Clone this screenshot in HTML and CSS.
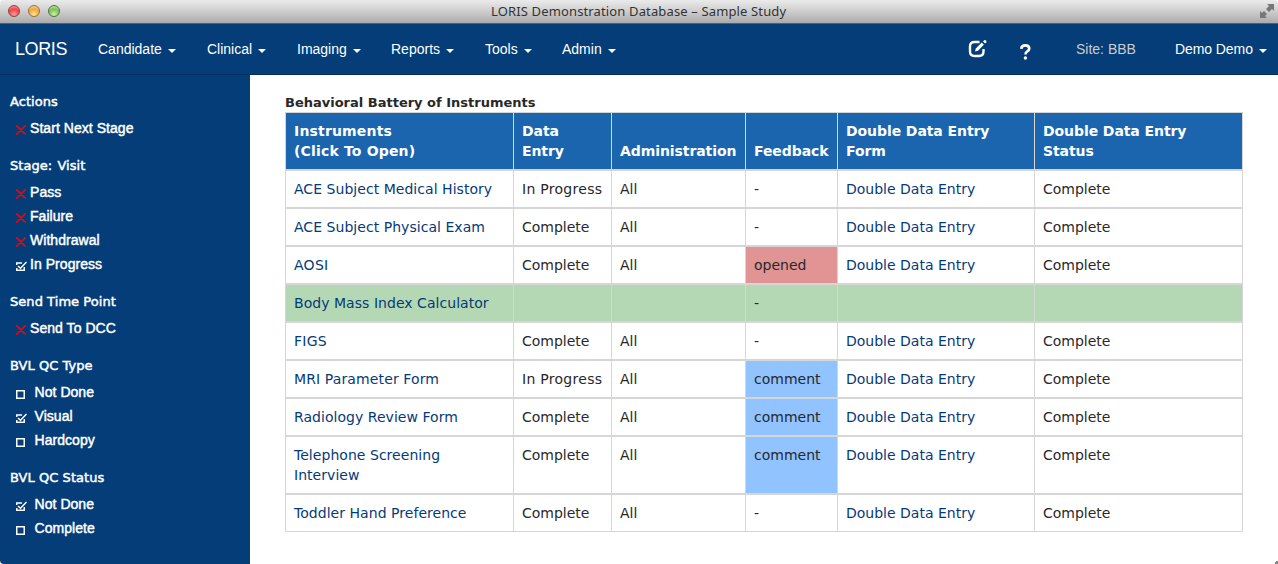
FILE: index.html
```
<!DOCTYPE html>
<html lang="en">
<head>
<meta charset="utf-8">
<title>LORIS Demonstration Database - Sample Study</title>
<link rel="stylesheet" href="styles.css">
</head>
<body>
<svg class="defs" width="0" height="0" aria-hidden="true">
  <symbol id="cross" viewBox="0 0 10 10"><path d="M0 1h1.500M8.500 1H10M1 1l8 8M9 1L1 9M0 9.300h1M9 9.300h1"/></symbol>
  <symbol id="box" viewBox="0 0 11 10"><path d="M.75 1.750h7.500v7.500h-7.500z"/></symbol>
  <symbol id="tick" viewBox="0 0 11 10"><path d="M0 2h6M.7 1.500v2.500M0 9.300h9M.7 7v2.500M8.300 6v3.500M2 5l2.500 2.300L10.500 1"/></symbol>
</svg>
<header class="titlebar">
  <div class="lights"><i class="light red"></i><i class="light amber"></i><i class="light green"></i></div>
  <div class="window-title"><span>LORIS Demonstration Database – Sample Study</span></div>
  <svg class="expand" viewBox="0 0 14 14" width="14" height="14"><path d="M7 0h7v7l-2-2-3 3-3-3 3-3zM0 14V7l2 2 2-2 3 3-2 2 2 2z"/></svg>
</header>
<nav class="nav">
  <a class="brand">LORIS</a>
  <a class="item candidate">Candidate<b class="caret"></b></a>
  <a class="item clinical">Clinical<b class="caret"></b></a>
  <a class="item imaging">Imaging<b class="caret"></b></a>
  <a class="item reports">Reports<b class="caret"></b></a>
  <a class="item tools">Tools<b class="caret"></b></a>
  <a class="item admin">Admin<b class="caret"></b></a>
  <svg class="edit" viewBox="0 0 19 18" width="19" height="18"><path class="frame" d="M11.500 2H6.500Q2 2 2 6.500v5Q2 16 6.500 16h4.500Q15.500 16 15.500 11.500V9"/><path class="pen" d="M7 11.500l.8-3L13.700 2.600l2.200 2.200L10 10.700z"/><path class="pen" d="M15 1.400l1.300-1.200q1-.3 1.700.4t.3 1.600L17 3.400z"/></svg>
  <svg class="help" viewBox="0 0 11 16" width="11" height="16"><path d="M1.300 4.800Q1.500 1.400 5.300 1.400T9.300 4.600Q9.300 6.200 7.300 7.400 5.500 8.500 5.500 10.500"/><circle cx="5.400" cy="14" r="1.700"/></svg>
  <span class="site">Site: BBB</span>
  <a class="user">Demo Demo<b class="caret"></b></a>
</nav>
<div class="body">
  <aside class="sidebar">
    <section>
      <h2>Actions</h2>
      <a class="act"><svg class="ic no"><use href="#cross"/></svg><span>Start Next Stage</span></a>
    </section>
    <section>
      <h2 class="stage">Stage: Visit</h2>
      <a class="act"><svg class="ic no"><use href="#cross"/></svg><span>Pass</span></a>
      <a class="act"><svg class="ic no"><use href="#cross"/></svg><span>Failure</span></a>
      <a class="act"><svg class="ic no"><use href="#cross"/></svg><span>Withdrawal</span></a>
      <a class="act"><svg class="ic yes"><use href="#tick"/></svg><span>In Progress</span></a>
    </section>
    <section>
      <h2>Send Time Point</h2>
      <a class="act"><svg class="ic no"><use href="#cross"/></svg><span>Send To DCC</span></a>
    </section>
    <section>
      <h2>BVL QC Type</h2>
      <a class="act qc"><svg class="ic box"><use href="#box"/></svg><span>Not Done</span></a>
      <a class="act qc"><svg class="ic yes"><use href="#tick"/></svg><span>Visual</span></a>
      <a class="act qc"><svg class="ic box"><use href="#box"/></svg><span>Hardcopy</span></a>
    </section>
    <section>
      <h2>BVL QC Status</h2>
      <a class="act qc"><svg class="ic yes"><use href="#tick"/></svg><span>Not Done</span></a>
      <a class="act qc"><svg class="ic box"><use href="#box"/></svg><span>Complete</span></a>
    </section>
  </aside>
  <main class="main">
    <h1>Behavioral Battery of Instruments</h1>
    <table class="battery">
      <colgroup><col class="c1"><col class="c2"><col class="c3"><col class="c4"><col class="c5"><col class="c6"></colgroup>
      <thead><tr><th class="wide">Instruments<br>(Click To Open)</th><th>Data<br>Entry</th><th>Administration</th><th>Feedback</th><th>Double Data Entry<br>Form</th><th>Double Data Entry<br>Status</th></tr></thead>
      <tbody>
        <tr><td><a>ACE Subject Medical History</a></td><td class="progress">In Progress</td><td>All</td><td>-</td><td><a>Double Data Entry</a></td><td>Complete</td></tr>
        <tr><td><a>ACE Subject Physical Exam</a></td><td>Complete</td><td>All</td><td>-</td><td><a>Double Data Entry</a></td><td>Complete</td></tr>
        <tr><td class="progress"><a>AOSI</a></td><td>Complete</td><td>All</td><td class="opened">opened</td><td><a>Double Data Entry</a></td><td>Complete</td></tr>
        <tr class="current"><td><a>Body Mass Index Calculator</a></td><td></td><td></td><td>-</td><td></td><td></td></tr>
        <tr><td class="progress"><a>FIGS</a></td><td>Complete</td><td>All</td><td>-</td><td><a>Double Data Entry</a></td><td>Complete</td></tr>
        <tr><td class="form"><a>MRI Parameter Form</a></td><td class="progress">In Progress</td><td>All</td><td class="comment">comment</td><td><a>Double Data Entry</a></td><td>Complete</td></tr>
        <tr><td><a>Radiology Review Form</a></td><td>Complete</td><td>All</td><td class="comment">comment</td><td><a>Double Data Entry</a></td><td>Complete</td></tr>
        <tr><td><a>Telephone Screening<br>Interview</a></td><td>Complete</td><td>All</td><td class="comment">comment</td><td><a>Double Data Entry</a></td><td>Complete</td></tr>
        <tr><td><a>Toddler Hand Preference</a></td><td>Complete</td><td>All</td><td>-</td><td><a>Double Data Entry</a></td><td>Complete</td></tr>
      </tbody>
    </table>
    <i class="grip"></i>
  </main>
</div>
</body>
</html>
```
FILE: styles.css
```
* { box-sizing: border-box; }
body { margin: 0; width: 1278px; height: 564px; overflow: hidden; background: #fff; color: #282828; font: 14px/20px "DejaVu Sans", sans-serif; }
.defs { display: block; position: absolute; }

.titlebar { display: flex; align-items: center; height: 24px; padding: 0 4px 1px 8px; background: linear-gradient(#ebebeb, #d0d0d0 45%, #ababab); border-bottom: 1px solid #5d5d5d; border-radius: 4px 4px 0 0; }
.lights { display: flex; gap: 8px; width: 70px; }
.light { width: 12px; height: 12px; border-radius: 50%; border: 1px solid; }
.red { background: radial-gradient(circle at 50% 85%, #ff9c9c, #f04444 55%, #f9b0b0); border-color: #8e4040; }
.amber { background: radial-gradient(circle at 50% 85%, #ffe98c, #f0a53c 55%, #fbe0b0); border-color: #94703c; }
.green { background: radial-gradient(circle at 50% 85%, #c8f59c, #7fc057 55%, #d0eec0); border-color: #4e7440; }
.window-title { flex: 1; padding-left: 413px; font: 13px/22px "Noto Sans", sans-serif; letter-spacing: .14px; color: #333; white-space: nowrap; }
.expand { fill: #777; }

.nav { display: flex; align-items: center; height: 51px; padding-left: 15px; background: #053d78; border-bottom: 1px solid #042e5c; color: #fff; font: 14px/50px "Liberation Sans", sans-serif; white-space: nowrap; }
.brand { width: 83px; font-size: 18px; letter-spacing: -.4px; }
.candidate { width: 109px; }
.clinical { width: 90px; }
.imaging { width: 94px; }
.reports { width: 94px; }
.tools { width: 77px; }
.admin { width: 406px; }
.caret { display: inline-block; margin: 2px 0 0 6px; border: 4px solid transparent; border-top-color: #fff; border-bottom: 0; vertical-align: middle; }
.edit { margin-right: 33px; }
.frame { fill: none; stroke: #fff; stroke-width: 2.4; }
.pen { fill: #fff; }
.help { margin: 6px 45px 0 0; fill: #fff; }
.help path { fill: none; stroke: #fff; stroke-width: 2.6; }
.site { width: 99px; color: #ccc; }
.user { letter-spacing: -.08px; }

.body { display: flex; height: 489px; }
.sidebar { width: 250px; padding: 17px 10px 0; background: #053d78; color: #fff; border-bottom-left-radius: 4px; }
.sidebar section { margin-bottom: 16px; }
.sidebar h2 { margin: 0 0 4px; font: 13px/20px "DejaVu Sans", sans-serif; letter-spacing: .05px; -webkit-text-stroke: .45px #fff; }
.stage { word-spacing: 1px; }
.act { display: flex; height: 24px; padding-left: 6px; font: 14px/24px "Liberation Sans", sans-serif; letter-spacing: .05px; -webkit-text-stroke: .45px #fff; white-space: nowrap; }
.ic { width: 11px; height: 10px; margin: 9px 3px 0 0; fill: none; stroke: #fff; stroke-width: 1.5; }
.no { width: 10px; margin-right: 4px; stroke: #f00; stroke-width: 1.6; }
.yes { stroke-width: 1.5; }
.qc .ic { margin-right: 7.500px; }

.main { flex: 1; position: relative; padding: 18px 0 0 35px; }
.main h1 { margin: 0; font: bold 13px/20px "DejaVu Sans", sans-serif; height: 19px; white-space: nowrap; }
.battery { width: 958px; table-layout: fixed; border-collapse: separate; border-spacing: 0; border: 1px solid #d6d6d6; border-width: 1px 0 0 1px; }
.c1 { width: 228px; }
.c2 { width: 98px; }
.c3 { width: 134px; }
.c4 { width: 92px; }
.c5 { width: 197px; }
.c6 { width: 208px; }
.battery th, .battery td { padding: 8px 0 8px 8px; border: 0 solid #d6d6d6; border-width: 0 1px 2px 0; height: 38px; text-align: left; vertical-align: top; white-space: nowrap; }
.battery th { height: 58px; background: #1b65ae; color: #fff; vertical-align: bottom; font-weight: bold; letter-spacing: -.08px; }
.battery th.wide { letter-spacing: .17px; }
.battery td:first-child { letter-spacing: .04px; }
.battery td.progress { letter-spacing: .28px; }
.battery td.form { letter-spacing: .12px; }
.battery a { color: #053a78; }
.battery tr:last-child td { border-bottom-width: 1px; height: 37px; }
.battery thead tr:last-child th { border-bottom-width: 2px; }
.battery .current td { background: #b4d8b4; }
.battery .opened { background: #e09494; }
.battery .comment { background: #90c3ff; }
.grip { position: absolute; right: 0; bottom: 0; border: 1px solid #888; border-width: 0 2px 2px 0; width: 3px; height: 3px; }
```
